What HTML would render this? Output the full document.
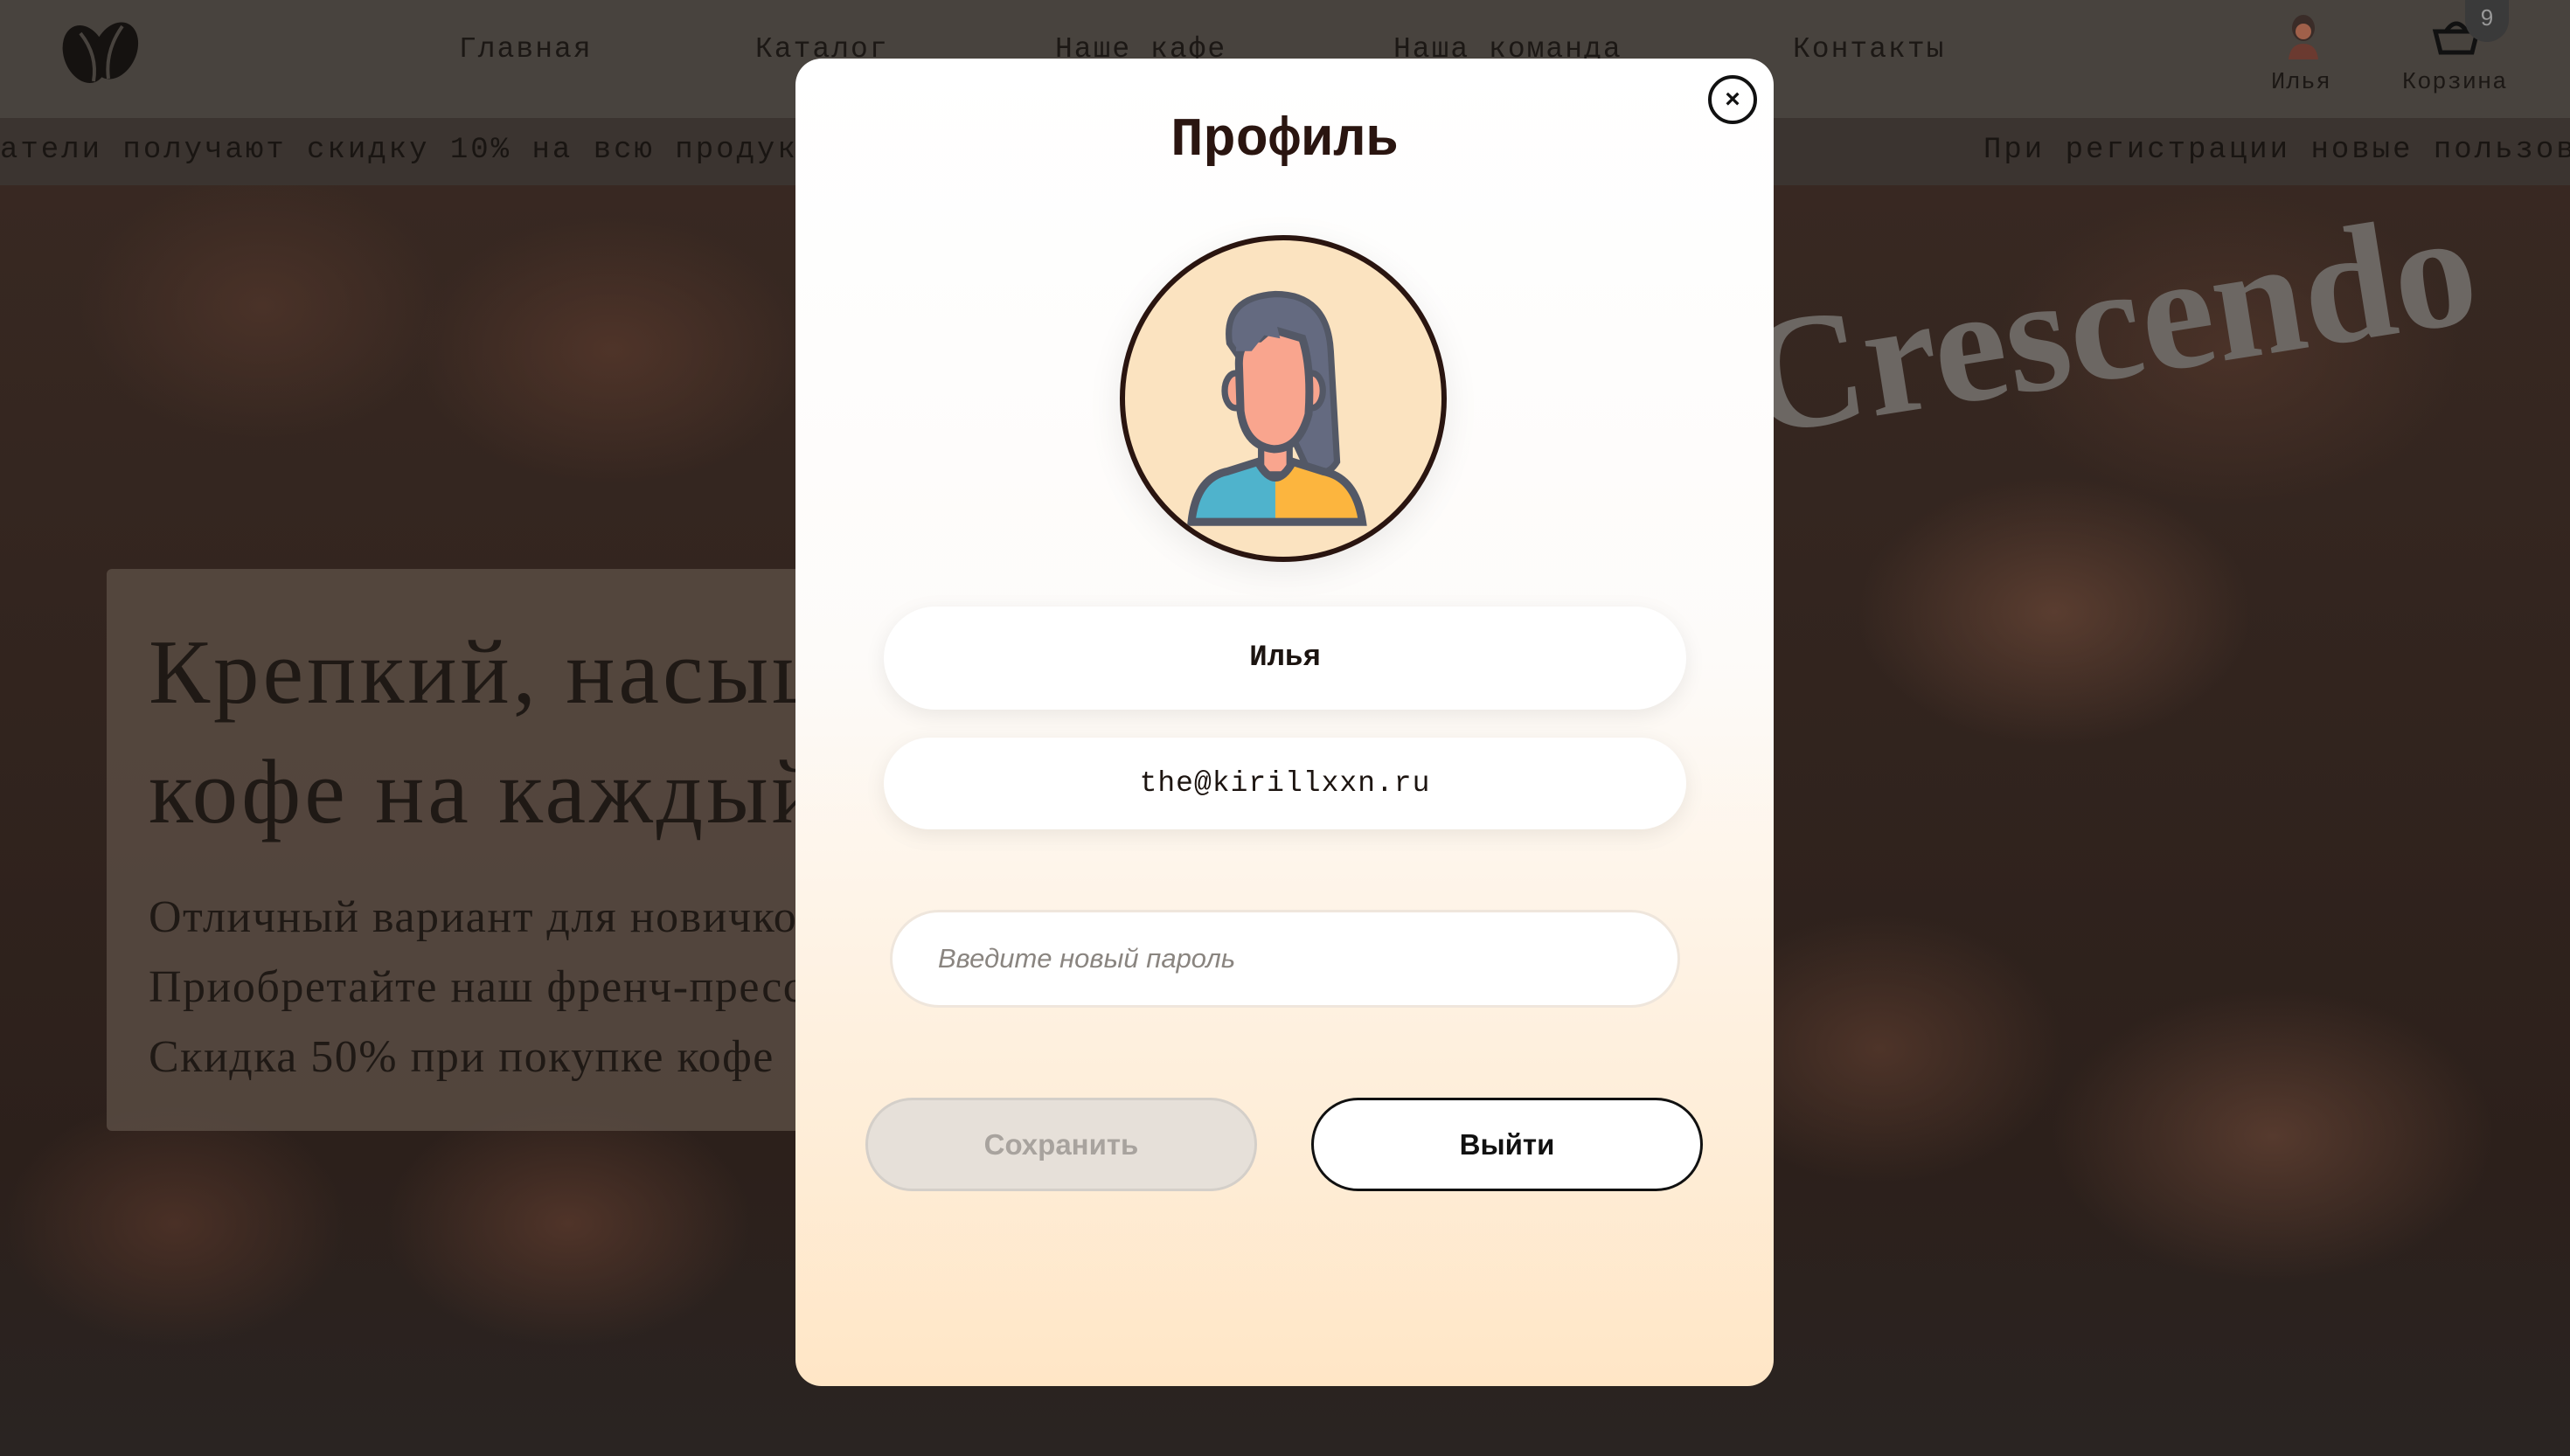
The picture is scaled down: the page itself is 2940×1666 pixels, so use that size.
<!DOCTYPE html>
<html><head><meta charset="utf-8"><style>
*{margin:0;padding:0;box-sizing:border-box}
body{width:2940px;height:1666px;overflow:hidden;position:relative;background:#2e211c;font-family:"Liberation Sans",sans-serif}
.bg{position:absolute;inset:0;background:
radial-gradient(ellipse 320px 220px at 2350px 700px,#5a3d30,transparent 70%),
radial-gradient(ellipse 360px 240px at 2600px 1300px,#563a2e,transparent 70%),
radial-gradient(ellipse 300px 220px at 2150px 1200px,#4e3429,transparent 70%),
radial-gradient(ellipse 380px 260px at 2550px 400px,#4a3228,transparent 70%),
radial-gradient(ellipse 300px 220px at 300px 350px,#4a3228,transparent 70%),
radial-gradient(ellipse 320px 220px at 700px 400px,#4f3429,transparent 70%),
radial-gradient(ellipse 280px 200px at 200px 1400px,#4a3026,transparent 70%),
radial-gradient(ellipse 300px 200px at 650px 1400px,#503429,transparent 70%),
linear-gradient(#3a2a23,#2c201b 80%,#2a2422)}
.hdr{position:absolute;left:0;top:0;width:2940px;height:135px;background:#48433e}
.nav{position:absolute;top:38px;font:33px "Liberation Mono",monospace;color:#1c1815;letter-spacing:2px}
.bar{position:absolute;left:0;top:135px;width:2940px;height:77px;background:#3b3430;font:34px "Liberation Mono",monospace;color:#191512;white-space:nowrap;letter-spacing:3px}
.hero{position:absolute;left:122px;top:651px;width:1000px;height:643px;background:rgba(95,82,72,.75);border-radius:6px}
.h1{position:absolute;left:170px;top:700px;font:105px/137px "Liberation Serif",serif;color:#1f1915;white-space:nowrap;letter-spacing:4px}
.sub{position:absolute;left:170px;top:1010px;font:52px/80px "Liberation Serif",serif;color:#1f1915;white-space:nowrap;letter-spacing:1.5px}
.cres{position:absolute;left:2015px;top:325px;font:bold 188px "Liberation Serif",serif;color:#6c6763;transform:rotate(-9deg);transform-origin:left bottom;white-space:nowrap}
.modal{position:absolute;left:910px;top:67px;width:1119px;height:1519px;border-radius:30px;background:linear-gradient(#fff 0%,#fdfbf9 45%,#ffe6c6 100%)}
.title{position:absolute;left:0;width:100%;top:58px;text-align:center;font:bold 62px "Liberation Mono",monospace;color:#2a1510}
.close{position:absolute;left:1044px;top:19px;width:56px;height:56px;border:4px solid #111;border-radius:50%;text-align:center;font:bold 30px/48px "Liberation Sans",sans-serif;color:#111}
.av{position:absolute;left:371px;top:202px;width:374px;height:374px;border-radius:50%;border:6px solid #2a1510;background:#fbe3c0;box-shadow:0 10px 40px rgba(0,0,0,.08);overflow:hidden}
.fld{position:absolute;background:#fff;border-radius:60px;box-shadow:0 6px 24px rgba(0,0,0,.08);text-align:center;color:#1c1410}
.btn{position:absolute;top:1189px;width:448px;height:107px;border-radius:54px;text-align:center;font:bold 33px/101px "Liberation Sans",sans-serif}
</style></head><body>
<div class="bg"></div>
<div class="cres">Crescendo</div>
<div class="hero"></div>
<div class="h1">Крепкий, насыщенный<br>кофе на каждый день</div>
<div class="sub">Отличный вариант для новичков<br>Приобретайте наш френч-пресс<br>Скидка 50% при покупке кофе</div>
<div class="hdr">
<svg style="position:absolute;left:62px;top:18px" width="104" height="80" viewBox="0 0 104 80"><ellipse cx="35" cy="44" rx="24" ry="34" fill="#151210" transform="rotate(-20 35 44)"/><ellipse cx="70" cy="40" rx="24" ry="34" fill="#151210" transform="rotate(25 70 40)"/><path d="M30 20 Q50 45 45 75" stroke="#48433e" stroke-width="4" fill="none"/><path d="M78 12 Q58 40 62 72" stroke="#48433e" stroke-width="4" fill="none"/></svg>
<div class="nav" style="left:525px">Главная</div>
<div class="nav" style="left:864px">Каталог</div>
<div class="nav" style="left:1207px">Наше кафе</div>
<div class="nav" style="left:1594px">Наша команда</div>
<div class="nav" style="left:2051px">Контакты</div>
<svg style="position:absolute;left:2612px;top:14px" width="46" height="56" viewBox="0 0 46 56"><ellipse cx="23" cy="18" rx="13" ry="15" fill="#3a2c28"/><circle cx="23" cy="22" r="9" fill="#a0604a"/><path d="M6 54 Q8 36 23 36 Q38 36 40 54Z" fill="#6b3a30"/></svg>
<div class="nav" style="left:2598px;top:80px;font-size:27px;letter-spacing:1px">Илья</div>
<svg style="position:absolute;left:2782px;top:18px" width="56" height="46" viewBox="0 0 56 46"><path d="M4 18 H52 L46 42 H10 Z" fill="none" stroke="#111" stroke-width="5"/><path d="M16 18 Q28 0 40 18" fill="none" stroke="#111" stroke-width="5"/></svg>
<div style="position:absolute;left:2820px;top:0;width:50px;height:48px;border-radius:0 0 25px 25px;background:#3a3a3a;color:#999;font:26px/40px 'Liberation Sans';text-align:center">9</div>
<div class="nav" style="left:2748px;top:80px;font-size:27px;letter-spacing:1px">Корзина</div>
</div>
<div class="bar"><div style="position:absolute;left:0;top:18px">атели получают скидку 10% на всю продукцию</div><div style="position:absolute;left:2269px;top:18px">При регистрации новые пользователи</div></div>
<div class="modal">
<div class="title">Профиль</div>
<div class="close">×</div>
<div class="av"><svg width="362" height="362" viewBox="0 0 200 200">
<path d="M66 65 Q62 36 95 34 Q128 34 130 70 L134 140 Q128 150 116 146 L104 120 Z" fill="#646a80" stroke="#535866" stroke-width="4"/>
<ellipse cx="70" cy="95" rx="7" ry="11" fill="#f9a58e" stroke="#535866" stroke-width="4"/>
<ellipse cx="118" cy="95" rx="7" ry="11" fill="#f9a58e" stroke="#535866" stroke-width="4"/>
<path d="M86 125 L86 148 L104 148 L104 125Z" fill="#f9a58e" stroke="#535866" stroke-width="4"/>
<path d="M72 78 Q72 62 85 62 L92 56 L112 62 Q118 80 116 110 Q110 132 94 132 Q76 130 73 108 Z" fill="#f9a58e" stroke="#535866" stroke-width="5"/>
<path d="M70 70 Q72 48 94 46 L98 62 L88 60 L80 70Z" fill="#646a80"/>
<path d="M42 178 Q45 150 65 146 L84 140 Q95 160 106 140 L125 146 Q146 150 150 178 Z" fill="#4fb3cc"/>
<path d="M95 152 Q102 150 106 140 L125 146 Q146 150 150 178 L95 178Z" fill="#fcb53e"/>
<path d="M42 178 Q45 150 65 146 L84 140 Q95 160 106 140 L125 146 Q146 150 150 178 Z" fill="none" stroke="#535866" stroke-width="5"/></svg></div>
<div class="fld" style="left:101px;top:627px;width:918px;height:118px;font:bold 34px/118px 'Liberation Mono',monospace">Илья</div>
<div class="fld" style="left:101px;top:777px;width:918px;height:105px;font:33px/105px 'Liberation Mono',monospace;letter-spacing:1px">the@kirillxxn.ru</div>
<div style="position:absolute;left:108px;top:974px;width:904px;height:112px;border-radius:56px;border:3px solid #efe6dc;background:#fff;font:italic 31px/106px 'Liberation Sans',sans-serif;color:#8a8580;padding-left:52px">Введите новый пароль</div>
<div class="btn" style="left:80px;background:#e6e0d9;border:3px solid #d4cfc9;color:#a8a39e">Сохранить</div>
<div class="btn" style="left:590px;background:#fff;border:3px solid #111;color:#111">Выйти</div>
</div>
</body></html>
